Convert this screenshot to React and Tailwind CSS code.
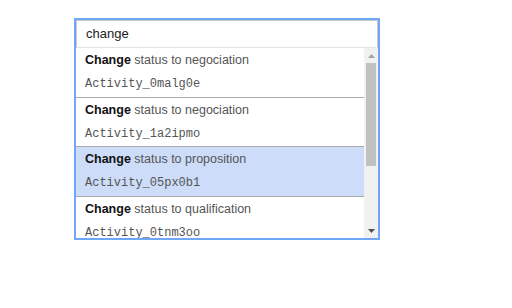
const items = [
  { status: 'negociation', id: 'Activity_0malg0e' },
  { status: 'negociation', id: 'Activity_1a2ipmo' },
  { status: 'proposition', id: 'Activity_05px0b1', active: true },
  { status: 'qualification', id: 'Activity_0tnm3oo' },
];

const App = () => {
  return (
    <div className="min-h-screen bg-white font-['Liberation_Sans',Arial,sans-serif]">
      <div className="pl-[74px] pt-[18px]">
        {/* Search popup */}
        <div className="w-[306px] h-[222px] border-2 border-[#6fa6f5] flex flex-col bg-white">
          <div className="h-[28px] border border-[#c8c8c8] border-b-[#e4e4e4] flex items-center px-[9px] text-[13px] text-[#222]">
            change
          </div>
          <div className="flex-1 flex min-h-0">
            <div className="flex-1 overflow-hidden">
              {items.map((item) => (
                <div
                  key={item.id}
                  className={
                    item.active
                      ? 'h-[49.5px] pl-[9px] border-b border-[#aaa] bg-[#cddcf8]'
                      : 'h-[49.5px] pl-[9px] border-b border-[#aaa]'
                  }
                >
                  <div className="pt-[4px] text-[12.5px] leading-[17px] text-[#555]">
                    <b className="text-[#111]">Change</b> status to {item.status}
                  </div>
                  <div className="pt-[7px] text-[12px] leading-[16px] text-[#555] font-['Liberation_Mono',monospace] whitespace-nowrap">
                    {item.id}
                  </div>
                </div>
              ))}
            </div>
            {/* Scrollbar */}
            <div className="w-[14px] bg-[#f1f1f1] flex flex-col items-center">
              <div className="h-[15px] flex items-center justify-center">
                <svg width="7" height="4" viewBox="0 0 7 4">
                  <path d="M3.5 0L7 4H0z" fill="#a3a3a3" />
                </svg>
              </div>
              <div className="w-[10px] h-[103px] bg-[#c1c1c1]" />
              <div className="flex-1" />
              <div className="h-[15px] flex items-center justify-center">
                <svg width="7" height="4" viewBox="0 0 7 4">
                  <path d="M0 0H7L3.5 4z" fill="#505050" />
                </svg>
              </div>
            </div>
          </div>
        </div>
      </div>
    </div>
  );
};

export default App;
